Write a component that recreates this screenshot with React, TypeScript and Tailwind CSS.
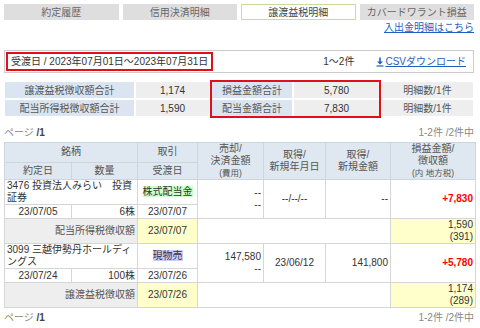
import React from "react";

// --- 譲渡益税明細 画面 ---------------------------------------------------------

const tabs = ["約定履歴", "信用決済明細", "譲渡益税明細", "カバードワラント損益"];

const th =
  "border border-[#cdd5de] bg-[#dfe7f0] text-[#555] font-normal text-center leading-[12px] p-0";
const td = "border border-[#d6d6d6] p-0 px-[2px] leading-[12px] whitespace-nowrap";

type Item = {
  name: [string, string];
  kind: string;
  kindBg: string;
  trade: string;
  qty: string;
  settle: string;
  sell: [string, string];
  acqDate: string;
  acqAmt: string;
  pl: string;
  taxLabel: string;
  taxDate: string;
  tax: [string, string];
};

const items: Item[] = [
  {
    name: ["3476 投資法人みらい　投資", "証券"],
    kind: "株式配当金",
    kindBg: "bg-[#ccffcc]",
    trade: "23/07/05",
    qty: "6株",
    settle: "23/07/07",
    sell: ["--", "--"],
    acqDate: "--/--/--",
    acqAmt: "--",
    pl: "+7,830",
    taxLabel: "配当所得税徴収額",
    taxDate: "23/07/07",
    tax: ["1,590", "(391)"],
  },
  {
    name: ["3099 三越伊勢丹ホールディ", "ングス"],
    kind: "現物売",
    kindBg: "bg-[#ccccff]",
    trade: "23/07/24",
    qty: "100株",
    settle: "23/07/26",
    sell: ["147,580", "--"],
    acqDate: "23/06/12",
    acqAmt: "141,800",
    pl: "+5,780",
    taxLabel: "譲渡益税徴収額",
    taxDate: "23/07/26",
    tax: ["1,174", "(289)"],
  },
];

const Pager = () => (
  <div className="flex h-[14px] w-[470px] items-center justify-between text-[#888]">
    <span>
      ページ <span className="font-bold text-[#444]">/1</span>
    </span>
    <span>1-2件 /2件中</span>
  </div>
);

export default function App() {
  return (
    <div className="h-[328px] w-[480px] overflow-hidden bg-white pl-[4px] font-['Liberation_Sans','Noto_Sans_CJK_JP',sans-serif] text-[10px] text-[#333]">
      {/* onglets */}
      <div className="grid w-[470px] grid-cols-4 gap-[4px] pt-[4px]">
        {tabs.map((t, i) => (
          <div
            key={t}
            className={
              i === 2
                ? "flex h-[16px] items-center justify-center border border-[#c4de9a] bg-white text-[#444]"
                : "flex h-[16px] items-center justify-center bg-[#dedede] text-[#666]"
            }
          >
            {t}
          </div>
        ))}
      </div>
      <div className="mt-[2px] flex w-[470px] justify-end leading-[12px]">
        <a className="text-[#1f5fbf] underline">入出金明細はこちら</a>
      </div>

      {/* filtre */}
      <div className="mt-[16px] flex h-[23px] w-[470px] items-center border border-[#cccccc] p-[1px]">
        <div className="flex h-[19px] items-center border-2 border-[#e0101a] px-[3px] text-[#333]">
          受渡日 / 2023年07月01日～2023年07月31日
        </div>
        <span className="ml-auto">1～2件</span>
        <a className="ml-[22px] mr-[6px] flex items-center text-[#1f5fbf] underline">
          <svg width="8" height="10" viewBox="0 0 8 10" className="mr-[1px]">
            <path d="M4 0.5V6.5" stroke="#1f5fbf" strokeWidth="1.6" />
            <path d="M1 4.5L4 7.5L7 4.5Z" fill="#1f5fbf" />
            <path d="M0.5 9H7.5" stroke="#1f5fbf" strokeWidth="1.2" />
          </svg>
          CSVダウンロード
        </a>
      </div>

      {/* totaux */}
      <div className="mt-[7px] flex w-[470px]">
        <div className="flex w-[130px] flex-col gap-[2px] py-[2px] pl-[1px]">
          <div className="flex h-[16px] items-center justify-center bg-[#dbe5f1] text-[#555]">譲渡益税徴収額合計</div>
          <div className="flex h-[16px] items-center justify-center bg-[#dbe5f1] text-[#555]">配当所得税徴収額合計</div>
        </div>
        <div className="ml-[2px] flex w-[73px] flex-col gap-[2px] py-[2px]">
          <div className="flex h-[16px] items-center justify-center bg-[#eeeeee]">1,174</div>
          <div className="flex h-[16px] items-center justify-center bg-[#eeeeee]">1,590</div>
        </div>
        <div className="ml-[1px] flex border-2 border-[#e0101a]">
          <div className="flex w-[80px] flex-col gap-[2px]">
            <div className="flex h-[16px] items-center justify-center bg-[#dbe5f1] text-[#555]">損益金額合計</div>
            <div className="flex h-[16px] items-center justify-center bg-[#dbe5f1] text-[#555]">配当金額合計</div>
          </div>
          <div className="ml-[2px] flex w-[85px] flex-col gap-[2px]">
            <div className="flex h-[16px] items-center justify-center bg-[#eeeeee]">5,780</div>
            <div className="flex h-[16px] items-center justify-center bg-[#eeeeee]">7,830</div>
          </div>
        </div>
        <div className="ml-[1px] flex w-[91px] flex-col gap-[2px] py-[2px]">
          <div className="flex h-[16px] items-center justify-center bg-[#eeeeee] text-[#555]">明細数/1件</div>
          <div className="flex h-[16px] items-center justify-center bg-[#eeeeee] text-[#555]">明細数/1件</div>
        </div>
      </div>

      <div className="mt-[7px] mb-[3px]">
        <Pager />
      </div>

      {/* tableau principal */}
      <table className="w-[471px] table-fixed border-collapse">
        <colgroup>
          <col className="w-[67px]" />
          <col className="w-[66px]" />
          <col className="w-[60px]" />
          <col className="w-[66px]" />
          <col className="w-[62px]" />
          <col className="w-[65px]" />
          <col className="w-[85px]" />
        </colgroup>
        <thead>
          <tr className="h-[19px]">
            <th colSpan={2} className={th}>銘柄</th>
            <th className={th}>取引</th>
            <th rowSpan={2} className={th}>
              売却/<br />決済金額<br />
              <span className="text-[8.5px] leading-[11px]">(費用)</span>
            </th>
            <th rowSpan={2} className={th}>取得/<br />新規年月日</th>
            <th rowSpan={2} className={th}>取得/<br />新規金額</th>
            <th rowSpan={2} className={th}>
              損益金額/<br />徴収額<br />
              <span className="text-[8.5px] leading-[11px]">(内 地方税)</span>
            </th>
          </tr>
          <tr className="h-[17px]">
            <th className={th}>約定日</th>
            <th className={th}>数量</th>
            <th className={th}>受渡日</th>
          </tr>
        </thead>
        <tbody>
          {items.map((it) => (
            <React.Fragment key={it.name[0]}>
              <tr className="h-[25px]">
                <td colSpan={2} className={`${td} text-left align-top`}>
                  {it.name[0]}
                  <br />
                  {it.name[1]}
                </td>
                <td className={`${td} text-center`}>
                  <span className={it.kindBg}>{it.kind}</span>
                </td>
                <td rowSpan={2} className={`${td} text-right`}>
                  {it.sell[0]}
                  <br />
                  {it.sell[1]}
                </td>
                <td rowSpan={2} className={`${td} text-center`}>{it.acqDate}</td>
                <td rowSpan={2} className={`${td} text-right`}>{it.acqAmt}</td>
                <td rowSpan={2} className={`${td} text-right font-bold text-[#ff0000]`}>{it.pl}</td>
              </tr>
              <tr className="h-[14px]">
                <td className={`${td} text-center`}>{it.trade}</td>
                <td className={`${td} text-right`}>{it.qty}</td>
                <td className={`${td} text-center`}>{it.settle}</td>
              </tr>
              <tr className="h-[23px]">
                <td colSpan={2} className={`${td} bg-[#eeeeee] text-right text-[#555]`}>{it.taxLabel}</td>
                <td className={`${td} bg-[#ffffcc] text-center`}>{it.taxDate}</td>
                <td colSpan={3} className={td} />
                <td className={`${td} bg-[#ffffcc] text-right leading-[11px]`}>
                  {it.tax[0]}
                  <br />
                  {it.tax[1]}
                </td>
              </tr>
            </React.Fragment>
          ))}
        </tbody>
      </table>

      <div className="mt-[2px]">
        <Pager />
      </div>
    </div>
  );
}
